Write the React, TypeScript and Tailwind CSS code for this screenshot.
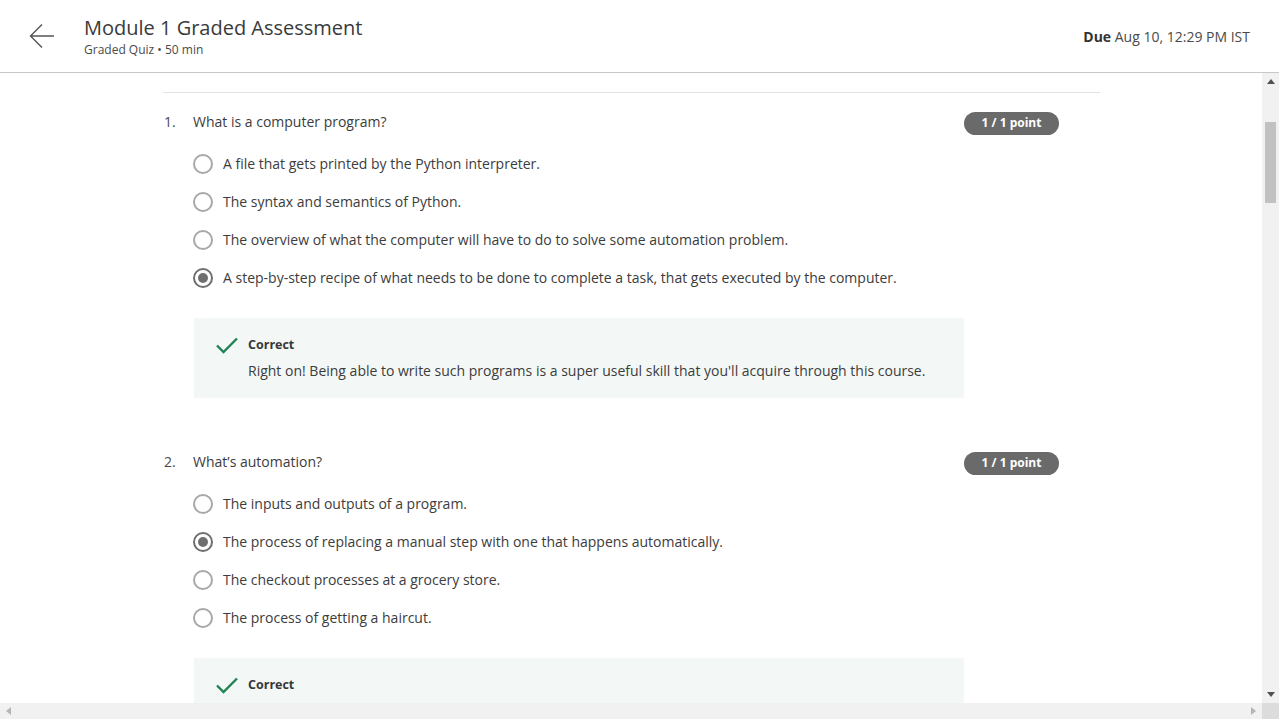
import React from "react";

type Q = {
  n: number;
  text: string;
  options: string[];
  selected: number;
  feedback?: string;
};

const questions: Q[] = [
  {
    n: 1,
    text: "What is a computer program?",
    options: [
      "A file that gets printed by the Python interpreter.",
      "The syntax and semantics of Python.",
      "The overview of what the computer will have to do to solve some automation problem.",
      "A step-by-step recipe of what needs to be done to complete a task, that gets executed by the computer.",
    ],
    selected: 3,
    feedback:
      "Right on! Being able to write such programs is a super useful skill that you'll acquire through this course.",
  },
  {
    n: 2,
    text: "What’s automation?",
    options: [
      "The inputs and outputs of a program.",
      "The process of replacing a manual step with one that happens automatically.",
      "The checkout processes at a grocery store.",
      "The process of getting a haircut.",
    ],
    selected: 1,
  },
];

function Radio({ checked }: { checked: boolean }) {
  return checked ? (
    <span className="flex h-[20px] w-[20px] shrink-0 items-center justify-center rounded-full border-2 border-[#6f6f6f]">
      <span className="h-[10px] w-[10px] rounded-full bg-[#6f6f6f]" />
    </span>
  ) : (
    <span className="h-[20px] w-[20px] shrink-0 rounded-full border-2 border-[#a8a8a8]" />
  );
}

function Check() {
  return (
    <svg width="24" height="20" viewBox="0 0 24 20" className="shrink-0">
      <path d="M2 9.5 L8.5 16 L22 2.5" fill="none" stroke="#1f8354" strokeWidth="2.4" />
    </svg>
  );
}

function Question({ q }: { q: Q }) {
  return (
    <div>
      <div className="flex h-[24px] items-center">
        <span className="w-[30px] pl-[1px] text-[14px] leading-[22px] text-[#4a4a4a]">{q.n}.</span>
        <span className="flex-1 text-[14px] leading-[22px] text-[#3c3c3c]">{q.text}</span>
        <span className="mr-[41px] mt-[2px] flex h-[23px] w-[95px] items-center justify-center rounded-full bg-[#6a6a6a] text-[12px] font-bold text-white">
          1 / 1 point
        </span>
      </div>
      <div className="mt-[11px] pl-[30px]">
        {q.options.map((o, i) => (
          <div key={i} className="flex h-[38px] items-center gap-[10px]">
            <Radio checked={i === q.selected} />
            <span className="-mt-[1px] text-[14px] text-[#3c3c3c]">{o}</span>
          </div>
        ))}
      </div>
      <div className="ml-[31px] mt-[21px] flex h-[80px] w-[770px] gap-[9px] bg-[#f3f8f6] pl-[21px] pt-[18px]">
        <div>
          <Check />
        </div>
        <div>
          <div className="text-[12.5px] font-bold leading-[18px] text-[#373737]">Correct</div>
          {q.feedback && (
            <div className="mt-[7px] text-[14px] leading-[20px] text-[#3c3c3c]">{q.feedback}</div>
          )}
        </div>
      </div>
    </div>
  );
}

export default function App() {
  return (
    <div
      className="flex h-[719px] w-[1279px] flex-col overflow-hidden bg-white"
      style={{ fontFamily: '"Open Sans", "Noto Sans", sans-serif' }}
    >
      <header className="flex h-[73px] shrink-0 items-center border-b border-[#c8c8c8] pr-[29px]">
        <div className="flex w-[84px] shrink-0 justify-start pl-[29px]">
          <svg width="26" height="26" viewBox="0 0 26 26">
            <path d="M25 13 H1.5 M13 1.5 L1.5 13 L13 24.5" fill="none" stroke="#555" strokeWidth="1.4" />
          </svg>
        </div>
        <div className="flex-1 self-start pt-[15px]">
          <div className="text-[20px] leading-[26px] text-[#3a3a3a]">Module 1 Graded Assessment</div>
          <div className="mt-[1px] text-[12px] leading-[16px] text-[#4a4a4a]">Graded Quiz • 50 min</div>
        </div>
        <div className="text-[14px] text-[#4a4a4a]">
          <span className="font-bold text-[#333]">Due</span> Aug 10, 12:29 PM IST
        </div>
      </header>
      <div className="flex min-h-0 flex-1">
        <main className="min-w-0 flex-1 overflow-hidden">
          <div className="ml-[163px] w-[937px] pt-[19px]">
            <div className="h-px bg-[#e2e2e2]" />
            <div className="mt-[17px]">
              <Question q={questions[0]} />
            </div>
            <div className="mt-[52px]">
              <Question q={questions[1]} />
            </div>
          </div>
        </main>
        <div className="flex w-[17px] shrink-0 flex-col bg-[#f1f1f1]">
          <div className="flex h-[17px] items-center justify-center">
            <svg width="8" height="5" viewBox="0 0 8 5"><path d="M0 5 L4 0 L8 5Z" fill="#505050" /></svg>
          </div>
          <div className="mx-[3px] mt-[32px] h-[81px] bg-[#c1c1c1]" />
          <div className="flex-1" />
          <div className="flex h-[17px] items-center justify-center">
            <svg width="8" height="5" viewBox="0 0 8 5"><path d="M0 0 L4 5 L8 0Z" fill="#505050" /></svg>
          </div>
        </div>
      </div>
      <div className="flex h-[16px] shrink-0">
        <div className="flex flex-1 items-center justify-between bg-[#f1f1f1] px-[6px]">
          <svg width="5" height="8" viewBox="0 0 5 8"><path d="M5 0 L0 4 L5 8Z" fill="#b5b5b5" /></svg>
          <svg width="5" height="8" viewBox="0 0 5 8"><path d="M0 0 L5 4 L0 8Z" fill="#b5b5b5" /></svg>
        </div>
        <div className="w-[17px] bg-[#dcdcdc]" />
      </div>
    </div>
  );
}
